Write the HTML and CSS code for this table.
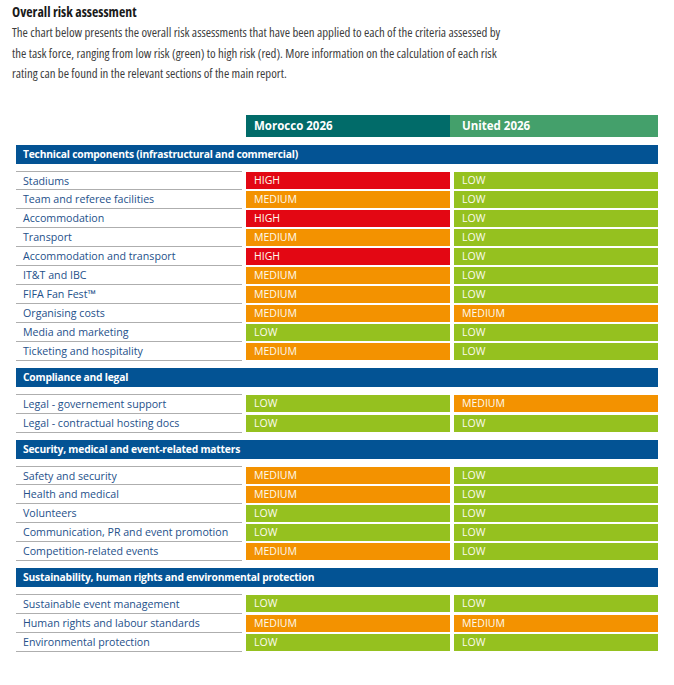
FILE: index.html
```html
<!DOCTYPE html>
<html lang="en">
<head>
<meta charset="utf-8">
<title>Overall risk assessment</title>
<link rel="stylesheet" href="styles.css">
</head>
<body>
<div class="intro-block">
  <h1 class="title">Overall risk assessment</h1>
  <p class="intro">The chart below presents the overall risk assessments that have been applied to each of the criteria assessed by<br>the task force, ranging from low risk (green) to high risk (red). More information on the calculation of each risk<br>rating can be found in the relevant sections of the main report.</p>
</div>

<div class="chart">
  <div class="head-row">
    <div class="head-spacer"></div>
    <div class="col-head morocco">Morocco 2026</div>
    <div class="col-head united">United 2026</div>
  </div>

  <section class="group">
    <div class="group-bar">Technical components (infrastructural and commercial)</div>
    <div class="rows">
      <div class="row"><div class="label">Stadiums</div><div class="cell high">HIGH</div><div class="cell low">LOW</div></div>
      <div class="row"><div class="label">Team and referee facilities</div><div class="cell medium">MEDIUM</div><div class="cell low">LOW</div></div>
      <div class="row"><div class="label">Accommodation</div><div class="cell high">HIGH</div><div class="cell low">LOW</div></div>
      <div class="row"><div class="label">Transport</div><div class="cell medium">MEDIUM</div><div class="cell low">LOW</div></div>
      <div class="row"><div class="label">Accommodation and transport</div><div class="cell high">HIGH</div><div class="cell low">LOW</div></div>
      <div class="row"><div class="label">IT&amp;T and IBC</div><div class="cell medium">MEDIUM</div><div class="cell low">LOW</div></div>
      <div class="row"><div class="label">FIFA Fan Fest™</div><div class="cell medium">MEDIUM</div><div class="cell low">LOW</div></div>
      <div class="row"><div class="label">Organising costs</div><div class="cell medium">MEDIUM</div><div class="cell medium">MEDIUM</div></div>
      <div class="row"><div class="label">Media and marketing</div><div class="cell low">LOW</div><div class="cell low">LOW</div></div>
      <div class="row"><div class="label">Ticketing and hospitality</div><div class="cell medium">MEDIUM</div><div class="cell low">LOW</div></div>
    </div>
  </section>

  <section class="group">
    <div class="group-bar">Compliance and legal</div>
    <div class="rows">
      <div class="row"><div class="label">Legal - governement support</div><div class="cell low">LOW</div><div class="cell medium">MEDIUM</div></div>
      <div class="row"><div class="label">Legal - contractual hosting docs</div><div class="cell low">LOW</div><div class="cell low">LOW</div></div>
    </div>
  </section>

  <section class="group">
    <div class="group-bar">Security, medical and event-related matters</div>
    <div class="rows">
      <div class="row"><div class="label">Safety and security</div><div class="cell medium">MEDIUM</div><div class="cell low">LOW</div></div>
      <div class="row"><div class="label">Health and medical</div><div class="cell medium">MEDIUM</div><div class="cell low">LOW</div></div>
      <div class="row"><div class="label">Volunteers</div><div class="cell low">LOW</div><div class="cell low">LOW</div></div>
      <div class="row"><div class="label">Communication, PR and event promotion</div><div class="cell low">LOW</div><div class="cell low">LOW</div></div>
      <div class="row"><div class="label">Competition-related events</div><div class="cell medium">MEDIUM</div><div class="cell low">LOW</div></div>
    </div>
  </section>

  <section class="group">
    <div class="group-bar">Sustainability, human rights and environmental protection</div>
    <div class="rows">
      <div class="row"><div class="label">Sustainable event management</div><div class="cell low">LOW</div><div class="cell low">LOW</div></div>
      <div class="row"><div class="label">Human rights and labour standards</div><div class="cell medium">MEDIUM</div><div class="cell medium">MEDIUM</div></div>
      <div class="row"><div class="label">Environmental protection</div><div class="cell low">LOW</div><div class="cell low">LOW</div></div>
    </div>
  </section>
</div>
</body>
</html>
```
FILE: styles.css
```css
* { box-sizing: border-box; }

html, body {
  margin: 0;
  padding: 0;
  background: #ffffff;
}

body {
  font-family: "Open Sans", "Liberation Sans", sans-serif;
}

.intro-block {
  padding: 2px 0 0 12px;
}

.title {
  margin: 0;
  font-size: 13.8px;
  line-height: 19px;
  font-weight: 700;
  font-stretch: 75%;
  color: #1a1a1a;
}

.intro {
  margin: 1px 0 0;
  font-size: 12.8px;
  line-height: 20.5px;
  font-stretch: 75%;
  color: #3d3d3d;
  white-space: nowrap;
}

.chart {
  margin: 31px 0 0 16px;
  width: 642px;
}

.head-row {
  display: grid;
  grid-template-columns: 230px 204px 208px;
  height: 22px;
  margin-bottom: 8px;
}

.col-head {
  color: #ffffff;
  font-weight: 700;
  font-size: 11.5px;
  line-height: 22px;
}

.col-head.morocco {
  background: #016b69;
  padding-left: 8px;
}

.col-head.united {
  background: #44a06b;
  padding-left: 12px;
}

.group + .group {
  margin-top: 7px;
}

.group-bar {
  height: 19px;
  line-height: 19px;
  background: #035394;
  color: #ffffff;
  font-weight: 700;
  font-size: 10.3px;
  letter-spacing: -0.22px;
  padding-left: 7px;
  margin-bottom: 7px;
}

.row {
  display: grid;
  grid-template-columns: 226px 204px 204px;
  column-gap: 4px;
  align-items: start;
}

.label {
  height: 18.93px;
  line-height: 18px;
  border-bottom: 1px solid #aeaeae;
  padding-left: 7px;
  font-size: 10.65px;
  color: #24508a;
  white-space: nowrap;
}

.row:first-child .label {
  height: 19.93px;
  border-top: 1px solid #aeaeae;
}

.cell {
  height: 17px;
  margin-top: 1px;
  line-height: 17px;
  padding-left: 8px;
  font-size: 10.5px;
  color: #fdfbf0;
}

.cell.high { background: #e30713; }
.cell.medium { background: #f39200; }
.cell.low { background: #95c11f; }
```
